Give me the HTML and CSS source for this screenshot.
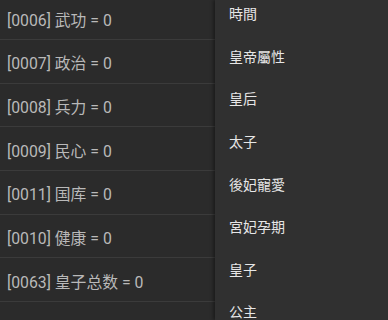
FILE: index.html
```html
<!DOCTYPE html>
<html lang="zh">
<head>
<meta charset="utf-8">
<link rel="stylesheet" href="styles.css">
</head>
<body>
<div class="screen">
  <ul class="vars">
    <li class="var">[0006] 武功 = 0</li>
    <li class="var">[0007] 政治 = 0</li>
    <li class="var">[0008] 兵力 = 0</li>
    <li class="var">[0009] 民心 = 0</li>
    <li class="var">[0011] 国库 = 0</li>
    <li class="var">[0010] 健康 = 0</li>
    <li class="var">[0063] 皇子总数 = 0</li>
    <li class="var"></li>
  </ul>
  <nav class="drawer">
    <ul class="menu">
      <li class="item">時間</li>
      <li class="item">皇帝屬性</li>
      <li class="item">皇后</li>
      <li class="item">太子</li>
      <li class="item">後妃寵愛</li>
      <li class="item">宮妃孕期</li>
      <li class="item">皇子</li>
      <li class="item">公主</li>
    </ul>
  </nav>
</div>
</body>
</html>
```
FILE: styles.css
```css
html, body {
  margin: 0;
  padding: 0;
  background: #2b2b2b;
  overflow: hidden;
}
.screen {
  position: relative;
  width: 388px;
  height: 320px;
  overflow: hidden;
  background: #2b2b2b;
}
.vars, .menu {
  list-style: none;
  margin: 0;
  padding: 0;
}
.vars {
  margin-top: -3.7px;
}
.var {
  box-sizing: border-box;
  height: 43.67px;
  border-bottom: 1px solid #3b3b3b;
  display: flex;
  align-items: center;
  padding: 3px 0 0 7px;
  font-family: Roboto, "Noto Sans CJK SC", sans-serif;
  font-size: 15.8px;
  color: #b9b9b9;
}
.drawer {
  position: absolute;
  top: 0;
  left: 215px;
  right: 0;
  bottom: 0;
  background: #303030;
  box-shadow: -2px 0 3px rgba(0, 0, 0, 0.35);
}
.menu {
  margin-top: -8.3px;
}
.item {
  height: 42.64px;
  display: flex;
  align-items: center;
  padding-left: 14px;
  font-family: "Noto Sans CJK TC", "Noto Sans CJK SC", sans-serif;
  font-size: 14px;
  color: #e6e6e6;
}
```
